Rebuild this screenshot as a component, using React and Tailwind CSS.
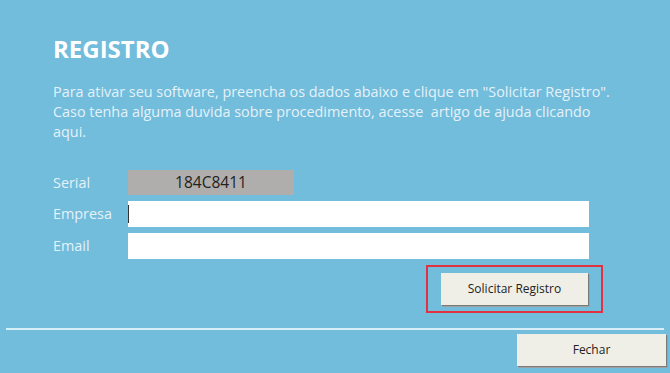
export default function App() {
  return (
    <div className="w-[670px] h-[373px] bg-[#72bcdc] overflow-hidden flex flex-col" style={{ fontFamily: '"Open Sans", "Noto Sans", sans-serif' }}>
      <div className="pl-[53px] pr-[20px] pt-[33px]">
        <h1 className="text-[24px] leading-[32px] font-bold text-white">REGISTRO</h1>
        <p className="mt-[17px] text-[14.4px] leading-[20px] text-[#e4f2f9] whitespace-nowrap">
          Para ativar seu software, preencha os dados abaixo e clique em "Solicitar Registro".
          <br />
          Caso tenha alguma duvida sobre procedimento, acesse&nbsp; artigo de ajuda clicando
          <br />
          aqui.
        </p>
      </div>
      <div className="pl-[53px] mt-[28px] flex flex-col gap-[6px]">
        <div className="flex items-center h-[25px]">
          <span className="w-[75px] text-[14.4px] text-[#e4f2f9]">Serial</span>
          <div className="w-[166px] h-[25px] bg-[#b0aeac] flex items-center justify-center text-[15.5px] text-[#222]">184C8411</div>
        </div>
        <div className="flex items-center h-[26px]">
          <span className="w-[75px] text-[14.4px] text-[#e4f2f9]">Empresa</span>
          <div className="w-[461px] h-[26px] bg-white flex items-center">
            <div className="w-[1px] h-[18px] bg-[#333]" />
          </div>
        </div>
        <div className="flex items-center h-[26px]">
          <span className="w-[75px] text-[14.4px] text-[#e4f2f9]">Email</span>
          <div className="w-[461px] h-[26px] bg-white" />
        </div>
      </div>
      <div className="flex justify-end pr-[67px] mt-[6px]">
        <div className="w-[177px] h-[48px] border-2 border-[#e2313f] flex items-center justify-center">
          <button className="w-[147px] h-[32px] bg-[#f0efe7] text-[12px] text-[#222] shadow-[1px_1px_0_#7a7a7a,2px_2px_0_#a0a0a0]">Solicitar Registro</button>
        </div>
      </div>
      <div className="mx-[6px] mt-[15px] h-[2px] bg-[#d8eef8]" />
      <div className="flex justify-end pr-[4px] mt-[4px]">
        <button className="w-[149px] h-[32px] bg-[#f0efe7] text-[12px] text-[#222] shadow-[1px_1px_0_#7a7a7a,2px_2px_0_#a0a0a0]">Fechar</button>
      </div>
    </div>
  );
}
